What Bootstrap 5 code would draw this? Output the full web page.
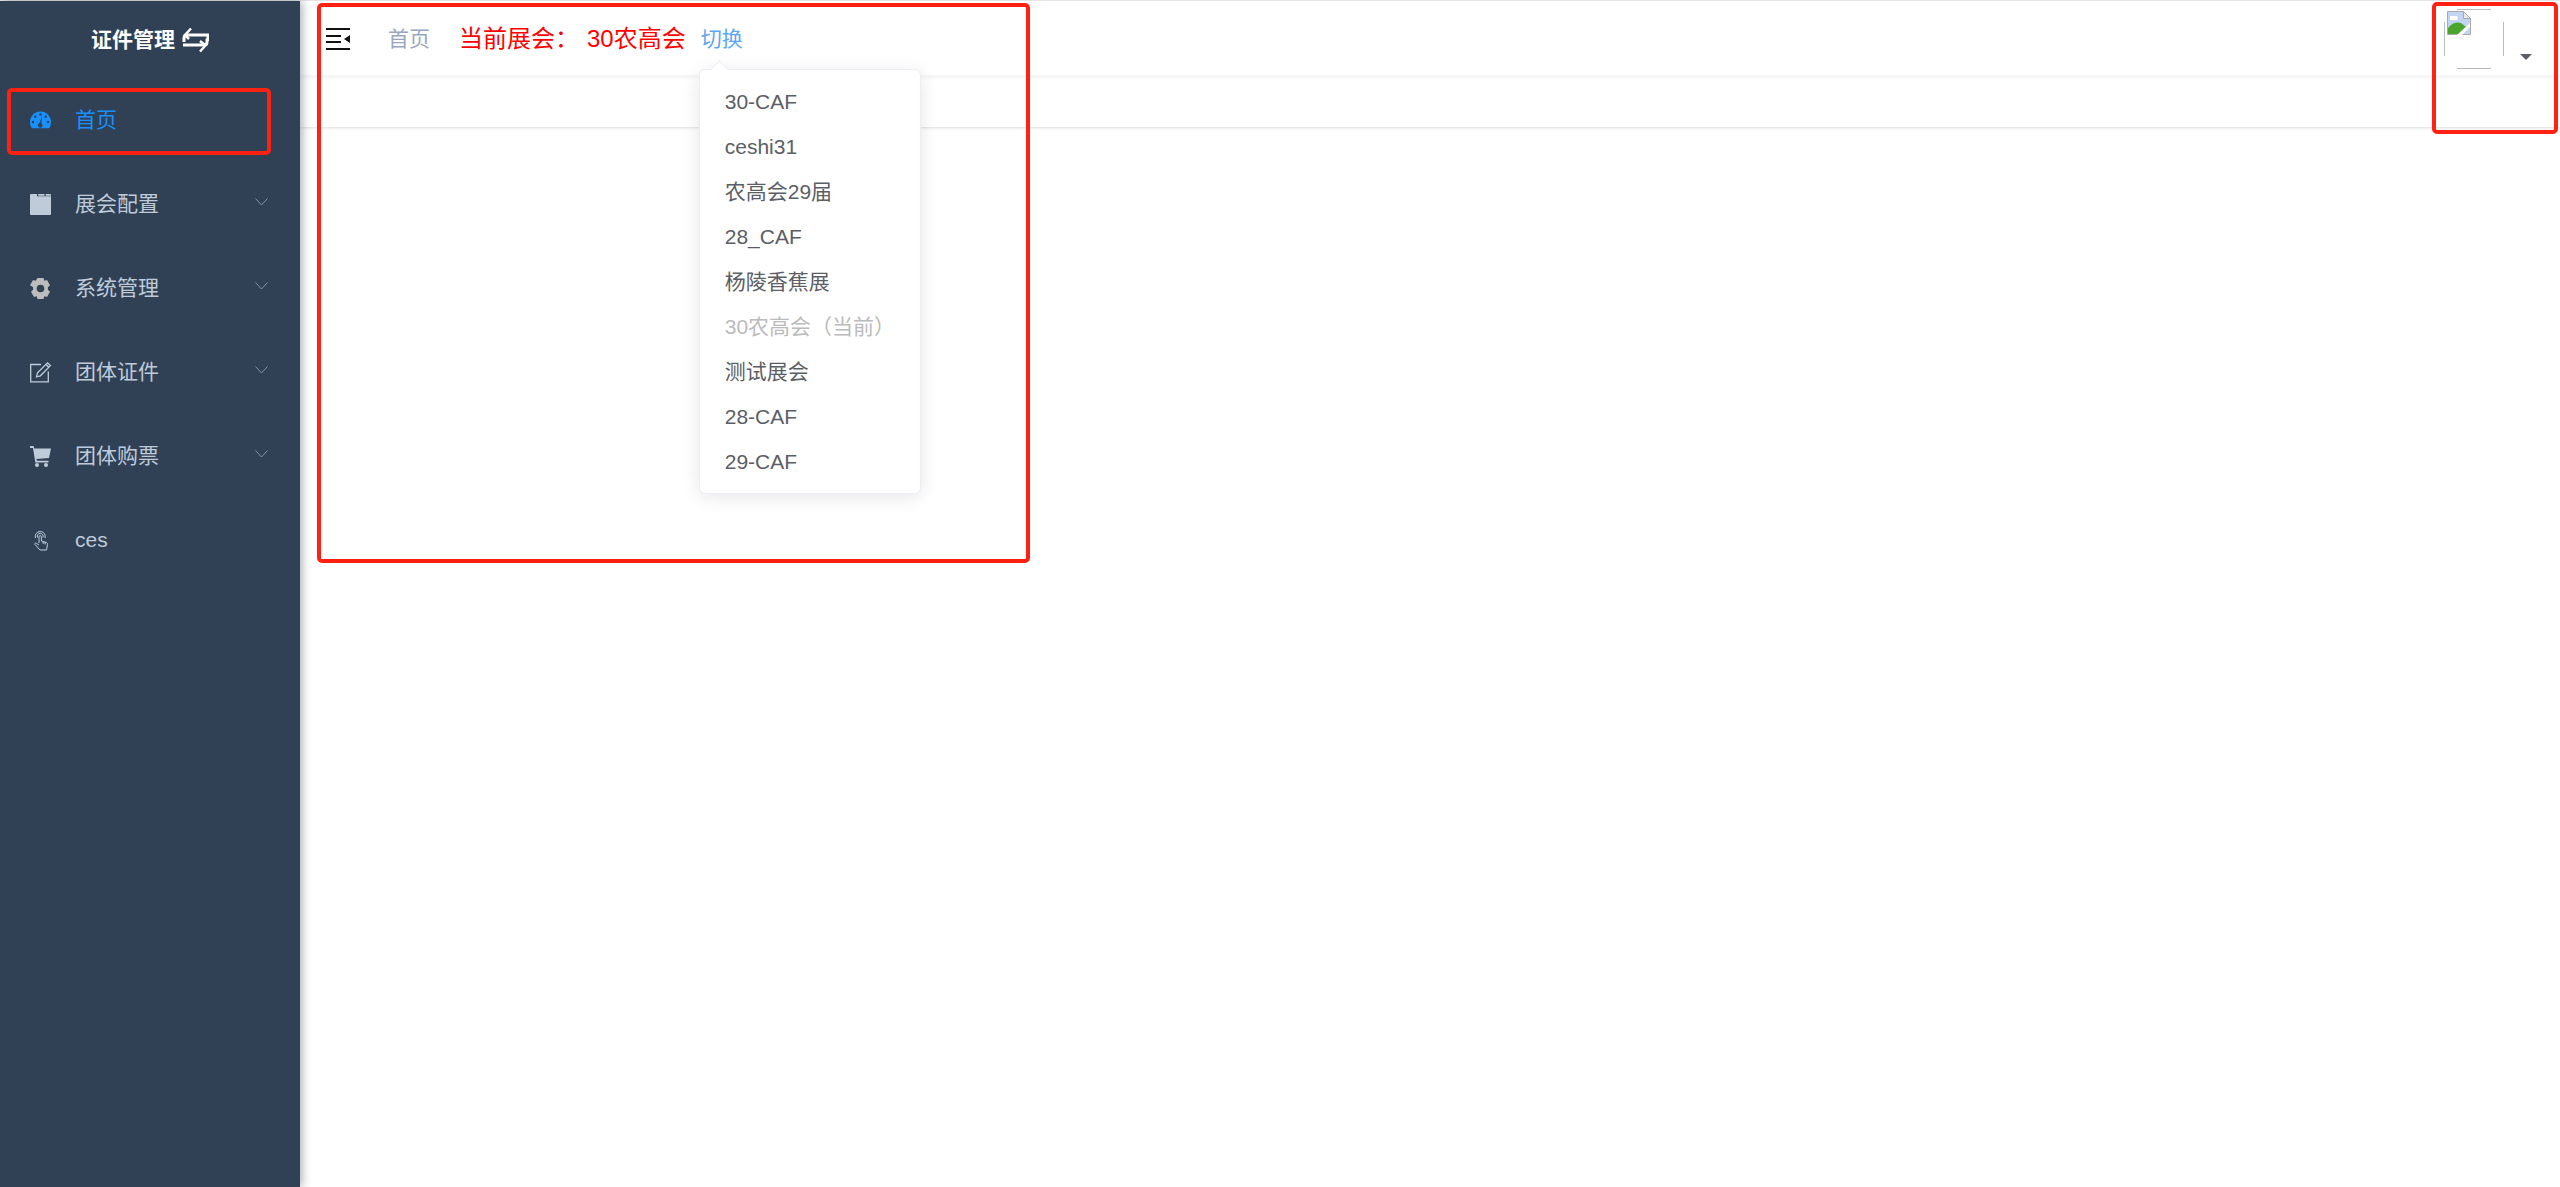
<!DOCTYPE html>
<html lang="zh-CN">
<head>
<meta charset="utf-8">
<title>证件管理</title>
<link rel="stylesheet" href="https://cdn.jsdelivr.net/npm/bootstrap@5.3.0/dist/css/bootstrap.min.css">
<style>
html,body{height:100%}
body{font-family:"Liberation Sans","Noto Sans CJK SC",sans-serif;font-size:21px;color:#5a5e66;background:#fff;overflow:hidden}
.app-shell{height:1187px;border-top:1px solid #e8e8e8;position:relative}
.side-bar{width:300px;background:#304156;box-shadow:2px 0 9px rgba(0,21,41,.35);z-index:3}
.side-title{height:77px;color:#fff;font-weight:700;font-size:21px;gap:7px}
.side-item{height:84px;padding:0 32px 0 30px;color:#bfcbd9;font-size:21px;gap:24px;text-decoration:none}
.side-item.is-active{color:#1890ff}
.side-icon{width:21px;height:21px;flex:none;overflow:visible}
.side-chev{width:13px;height:8px;margin-left:auto;margin-top:-4px;flex:none}
.top-bar{height:75px;padding-left:26px;box-shadow:0 1px 4px rgba(0,21,41,.08);position:relative;z-index:1}
.crumb{color:#97a8be;margin-left:38px}
.show-label{color:#f00;font-size:24px;margin-left:29px;white-space:pre}
.show-name{color:#f00;font-size:24px;margin-left:8px}
.switch-wrap{position:relative;margin-left:15px}
.switch-link{color:#5ba6f5;text-decoration:none}
.show-menu{display:block;position:absolute;top:46px;left:-2px;width:222px;margin:0;padding:9px 0;border:1px solid #ebeef5;border-radius:6px;box-shadow:0 3px 18px rgba(0,0,0,.1);z-index:5;font-size:21px}
.show-menu::before{content:"";position:absolute;left:13px;top:-7px;width:13px;height:13px;background:#fff;border-left:1px solid #ebeef5;border-top:1px solid #ebeef5;transform:rotate(45deg)}
.show-menu .dropdown-item{height:45px;line-height:45px;padding:0 0 0 25px;color:#5a5e66;position:relative}
.show-menu .dropdown-item.disabled{color:#bbb}
.user-area{margin-left:auto;padding-right:28px;gap:16px;padding-top:8px;align-self:flex-start}
.broken-img{width:60px;height:60px;position:relative;background:linear-gradient(#bbb,#bbb) 13px 0/34px 1px no-repeat,linear-gradient(#bbb,#bbb) 13px 59px/34px 1px no-repeat,linear-gradient(#bbb,#bbb) 0 13px/1px 34px no-repeat,linear-gradient(#bbb,#bbb) 59px 13px/1px 34px no-repeat,#fff}
.broken-img svg{display:block;margin:2px 0 0 3px}
.user-caret{width:0;height:0;border-left:6px solid transparent;border-right:6px solid transparent;border-top:6px solid #5a5e66;margin-top:45px}
.tag-row{height:51px;box-shadow:0 1px 3px rgba(0,0,0,.12),0 0 3px rgba(0,0,0,.04)}
.note-box{position:absolute;border:4px solid #ff2112;border-radius:5px;z-index:9;pointer-events:none}
.note-home{left:7px;top:87px;width:264px;height:67px}
.note-left{left:317px;top:2px;width:713px;height:560px}
.note-right{left:2432px;top:1px;width:126px;height:132px}
</style>
</head>
<body>
<div class="app-shell d-flex">
  <aside class="side-bar d-flex flex-column flex-shrink-0">
    <div class="side-title d-flex align-items-center justify-content-center">
      <span>证件管理</span>
      <svg width="27" height="26" viewBox="0 0 27 26" fill="none" stroke="#fff" stroke-width="3"><path d="M2 15v-4q0-3 3-3H26v6"/><path d="M25 11.500V15q0 3-3 3H1"/><path d="M9 1.500 3 8l4 4" stroke-width="2.500"/><path d="M18 14l5.500 4.500L18 24.500" stroke-width="2.500"/></svg>
    </div>
    <nav class="nav flex-column">
      <a class="side-item is-active d-flex align-items-center" href="#">
        <svg class="side-icon" viewBox="0 0 21 21"><path fill="#1890ff" d="M10.500 1.500C4.700 1.500 0 6.200 0 12c0 2 .5 4 1.500 5.700.2.300.5.500.8.500h16.400c.3 0 .6-.2.800-.5 1-1.700 1.500-3.700 1.500-5.700C21 6.200 16.300 1.500 10.500 1.500z"/><g fill="#304156"><circle cx="10.500" cy="4.500" r="1.200"/><circle cx="5.300" cy="6.800" r="1.200"/><circle cx="15.700" cy="6.800" r="1.200"/><circle cx="3" cy="12" r="1.200"/><circle cx="18" cy="12" r="1.200"/><path d="M12 6.500 11.400 13.500a2.200 2.200 0 1 1-2-.2z"/></g></svg>
        <span>首页</span>
      </a>
      <a class="side-item d-flex align-items-center" href="#">
        <svg class="side-icon" viewBox="0 0 21 21"><path fill="#bfcbd9" d="M1 0h19a1 1 0 0 1 1 1v19a1 1 0 0 1-1 1H1a1 1 0 0 1-1-1V1a1 1 0 0 1 1-1z"/><path fill="#304156" d="M7 0h1.200v2.200H7zM14.500 0h1.200v2.200H14.500zM8 1.700h6.500v.6H8zM15.500 1.700H21v.6h-5.500z"/></svg>
        <span>展会配置</span>
        <svg class="side-chev" viewBox="0 0 13 8" fill="none" stroke="#8492a3" stroke-width="1"><path d="M.5.500 6.500 7l6-6.500"/></svg>
      </a>
      <a class="side-item d-flex align-items-center" href="#">
        <svg class="side-icon" viewBox="0 0 21 21"><path fill="#bdbdbd" d="M7.500 0h6l.8 2.800 2.700-.7 3 5.100-2.100 2.100v2.400l2.100 2.100-3 5.100-2.700-.7-.8 2.800h-6l-.8-2.800-2.700.7-3-5.100 2.100-2.100V9.300L0 7.200l3-5.100 2.700.7z"/><circle cx="10.500" cy="10.500" r="3.800" fill="#304156"/></svg>
        <span>系统管理</span>
        <svg class="side-chev" viewBox="0 0 13 8" fill="none" stroke="#8492a3" stroke-width="1"><path d="M.5.500 6.500 7l6-6.500"/></svg>
      </a>
      <a class="side-item d-flex align-items-center" href="#">
        <svg class="side-icon" viewBox="0 0 21 21" fill="none" stroke="#bfcbd9" stroke-width="1.300"><path d="M11 2.500H.7v17.300h17.600V9.500"/><path d="M6.500 14.800l1-4L17.500 .9l2.900 2.700L10.400 13.800z"/><path d="M16 2.500l2.800 2.800"/></svg>
        <span>团体证件</span>
        <svg class="side-chev" viewBox="0 0 13 8" fill="none" stroke="#8492a3" stroke-width="1"><path d="M.5.500 6.500 7l6-6.500"/></svg>
      </a>
      <a class="side-item d-flex align-items-center" href="#">
        <svg class="side-icon" viewBox="0 0 21 21"><path fill="#bfcbd9" d="M0 0h3.500l.9 2.500H21l-2 9.500-12.500 1 .3 1.700H18.500v1.800H5.300L3 2H0z"/><circle cx="7" cy="19" r="2" fill="#bfcbd9"/><circle cx="16" cy="19" r="2" fill="#bfcbd9"/></svg>
        <span>团体购票</span>
        <svg class="side-chev" viewBox="0 0 13 8" fill="none" stroke="#8492a3" stroke-width="1"><path d="M.5.500 6.500 7l6-6.500"/></svg>
      </a>
      <a class="side-item d-flex align-items-center" href="#">
        <svg class="side-icon" viewBox="0 0 21 21" fill="none" stroke="#bfcbd9" stroke-width="1"><path d="M5.500 8a5 5 0 1 1 9.500 0"/><path d="M7.500 7.500a3 3 0 1 1 5.500 0"/><path d="M9 13V6.800a1.200 1.200 0 0 1 2.400 0V11l5 1.500c1 .4 1.300 1 1.100 2l-1 5.500H10l-5-5.500c-.5-.8.400-1.900 1.400-1.200L9 15"/><path d="M13.200 11.500v2.500M15.200 12v2.500"/></svg>
        <span>ces</span>
      </a>
    </nav>
  </aside>
  <main class="flex-grow-1 d-flex flex-column">
    <header class="top-bar d-flex align-items-center">
      <svg width="24" height="22" viewBox="0 0 24 22" class="flex-shrink-0"><path fill="#111" d="M0 0h24v2H0zM0 7h15v2H0zM0 13h15v2H0zM0 20h24v2H0z"/><path fill="#111" d="M24 7v8l-6-4z"/></svg>
      <span class="crumb">首页</span>
      <span class="show-label">当前展会：</span>
      <span class="show-name">30农高会</span>
      <div class="switch-wrap">
        <a class="switch-link" href="#">切换</a>
        <ul class="show-menu dropdown-menu list-unstyled">
          <li><a class="dropdown-item" href="#">30-CAF</a></li>
          <li><a class="dropdown-item" href="#">ceshi31</a></li>
          <li><a class="dropdown-item" href="#">农高会29届</a></li>
          <li><a class="dropdown-item" href="#">28_CAF</a></li>
          <li><a class="dropdown-item" href="#">杨陵香蕉展</a></li>
          <li><a class="dropdown-item disabled" href="#">30农高会（当前）</a></li>
          <li><a class="dropdown-item" href="#">测试展会</a></li>
          <li><a class="dropdown-item" href="#">28-CAF</a></li>
          <li><a class="dropdown-item" href="#">29-CAF</a></li>
        </ul>
      </div>
      <div class="user-area d-flex align-items-start">
        <div class="broken-img">
          <svg width="24" height="24" viewBox="0 0 24 24"><path fill="#c3d4f2" stroke="#aaa" d="M.5.500h16l7 7v16H.5z"/><path fill="#e8e8e8" stroke="#aaa" d="M16.500.5v7h7z"/><path fill="#fff" d="M3 5h7a3 3 0 0 1 0 4H3z"/><path fill="#4aa52e" d="M1 23v-6q6-7 13-5l5 4-7 7z"/><path fill="#fff" d="M10 24 23 12v4L15 24z"/></svg>
        </div>
        <span class="user-caret"></span>
      </div>
    </header>
    <div class="tag-row"></div>
  </main>
  <div class="note-box note-home"></div>
  <div class="note-box note-left"></div>
  <div class="note-box note-right"></div>
</div>
<script src="https://cdn.jsdelivr.net/npm/bootstrap@5.3.0/dist/js/bootstrap.bundle.min.js"></script>
</body>
</html>
